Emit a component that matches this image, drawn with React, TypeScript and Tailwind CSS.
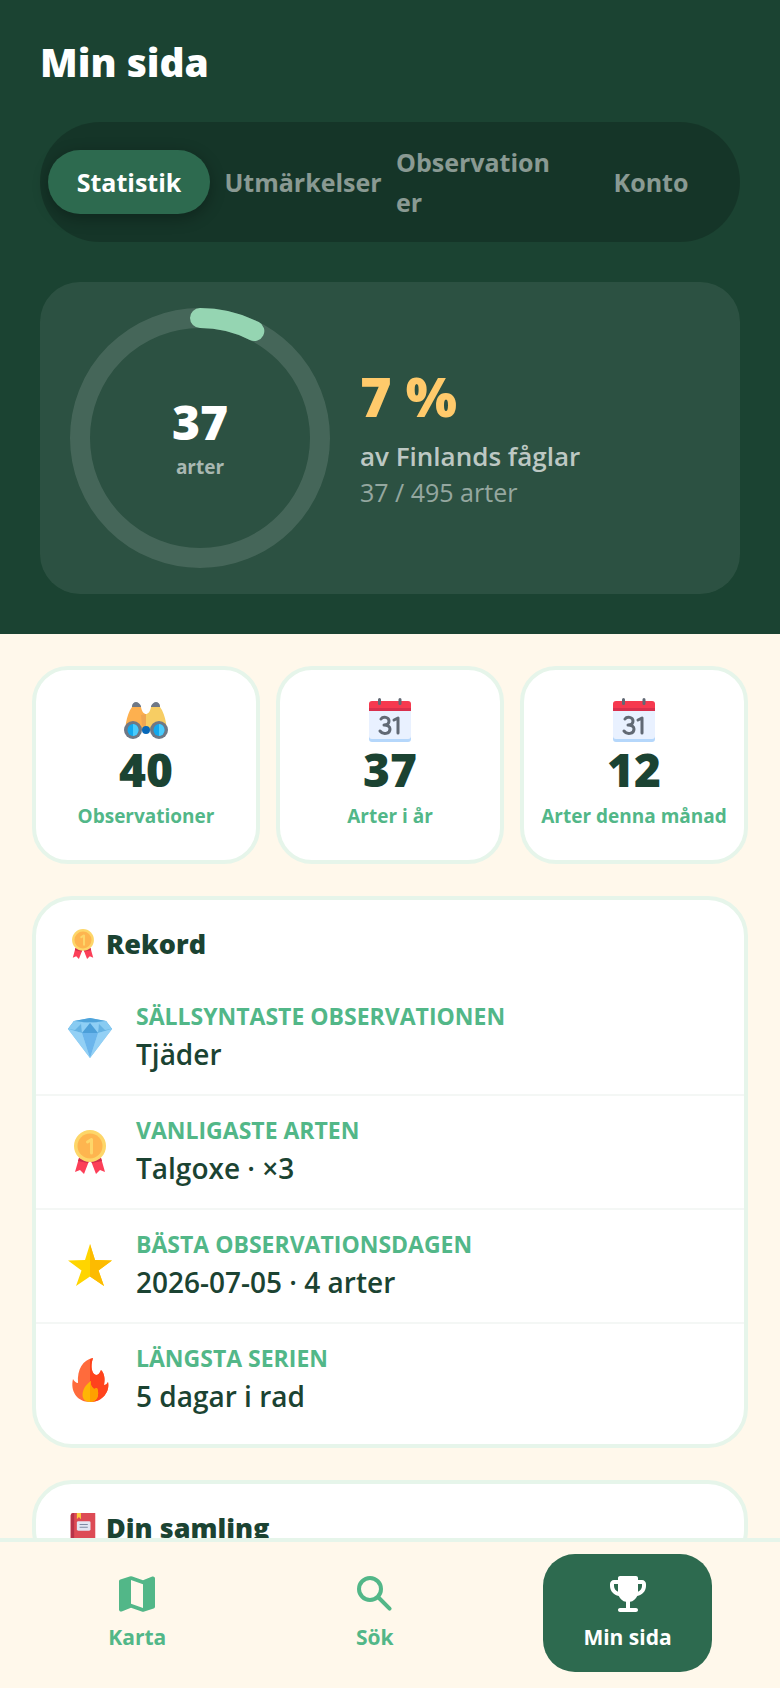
import React, { useState } from "react";

type IconProps = { className?: string };

const Binoculars = ({ className }: IconProps) => (
  <svg viewBox="0 0 44 44" className={className} aria-hidden="true">
    <path d="M8 12V8c0-2 2-4 4-4s4 2 5 4v5zM27 13V8c1-2 3-4 5-4s4 2 4 4v4z" fill="#6f7885" />
    <path d="M8 9h9c1 5 3 7 5 7v16H1l1-7C3 19 5 13 8 9z" fill="#fdb04f" />
    <path d="M36 9h-9c-1 5-3 7-5 7v16h21l-1-7c-1-6-3-12-6-16z" fill="#f7cd63" />
    <path d="M22 16v12h-4l-1-11z" fill="#efa652" />
    <circle cx="22" cy="32" r="4" fill="#0868b9" />
    <circle cx="9" cy="32" r="9" fill="#6f7885" />
    <circle cx="35" cy="32" r="9" fill="#6f7885" />
    <ellipse cx="9" cy="32" rx="5.5" ry="6" fill="#12a9ee" />
    <path d="M9 26a5.500 6 0 0 1 0 12z" fill="#4acbfb" />
    <ellipse cx="35" cy="32" rx="5.5" ry="6" fill="#12a9ee" />
    <path d="M35 26a5.500 6 0 0 1 0 12z" fill="#4acbfb" />
  </svg>
);

const Calendar = ({ className }: IconProps) => (
  <svg viewBox="0 0 44 44" className={className} aria-hidden="true">
    <rect x="1" y="10" width="42" height="34" rx="3" fill="#b5d7fb" />
    <path d="M1 12h42v26a3 3 0 0 1-3 3H4a3 3 0 0 1-3-3z" fill="#e9f1ff" />
    <path d="M4 3h36a3 3 0 0 1 3 3v7H1V6a3 3 0 0 1 3-3z" fill="#f6394f" />
    <path d="M1 10h42v3H1z" fill="#d92f4c" />
    <path d="M11.500 1.500v4M32 1.500v4" stroke="#616974" strokeWidth="3" strokeLinecap="round" />
    <path
      d="M13 21c2-3 8-2 8 2 0 3-2 4-5 4 4 0 6 2 6 4 0 5-7 6-10 2M26 22l4-2v15"
      fill="none"
      stroke="#616974"
      strokeWidth="3"
      strokeLinecap="round"
      strokeLinejoin="round"
    />
  </svg>
);

const Medal = ({ className }: IconProps) => (
  <svg viewBox="0 0 44 44" className={className} aria-hidden="true">
    <path d="M11 28l10 3-5 13-4-4-5 2z" fill="#fc3f58" />
    <path d="M33 28l-10 3 5 13 4-4 5 2z" fill="#fc3f58" />
    <path d="M11 28l10 3-1 2-10-2zM33 28l-10 3 1 2 10-2z" fill="#cf2e4c" />
    <circle cx="22" cy="16" r="16" fill="#fdd669" />
    <circle cx="22" cy="16" r="12.500" fill="#feb54f" />
    <path d="M19.500 12l4-2.500v13.500" fill="none" stroke="#fdd669" strokeWidth="3" strokeLinecap="round" strokeLinejoin="round" />
  </svg>
);

const Diamond = ({ className }: IconProps) => (
  <svg viewBox="0 0 44 44" className={className} aria-hidden="true">
    <path d="M6 5l16-3 16 3 6 8-22 29L0 13z" fill="#7cc4ee" />
    <path d="M6 5l16-3 16 3-8 2-8-1-8 1z" fill="#4fa3da" />
    <path d="M6 5L0 13l14 4L13 6z" fill="#65b2e3" />
    <path d="M38 5l6 8-14 4 1-11z" fill="#65b2e3" />
    <path d="M6 5l9 1-8 8-7-1zM38 5l-9 1 8 8 7-1z" fill="#88cbf2" />
    <path d="M13 6l9 1-8 10zM31 6l-9 1 8 10z" fill="#8fcff5" />
    <path d="M22 7l8 10H14z" fill="#4c9fd9" />
    <path d="M14 17h16l-8 25z" fill="#6bb5ec" />
    <path d="M0 13l14 4 8 25zM44 13l-14 4-8 25z" fill="#93d0f5" />
  </svg>
);

const Star = ({ className }: IconProps) => (
  <svg viewBox="0 0 44 44" className={className} aria-hidden="true">
    <path d="M22 0l5 16 17 .500-13.500 10L36 42l-14-9.500L8 42l5.500-15.500L0 16.500 17 16z" fill="#ffd500" />
    <path d="M22 0l5 16 17 .500-13.500 10L36 42l-14-9.500z" fill="#fdbb00" />
  </svg>
);

const Flame = ({ className }: IconProps) => (
  <svg viewBox="0 0 44 44" className={className} aria-hidden="true">
    <path
      d="M25 0C15 2 9 11 10 25c-2 0-4-2-5-4-3 12 4 23 17 23s20-11 18-20c-1 2-2 3-4 3 1-5 1-11-3-15-1 3-3 5-5 5-4-1-6-8-3-17z"
      fill="#ff6b3c"
    />
    <path d="M22 1l3-1c-3 9-1 16 3 17 2 0 4-2 5-5 4 4 4 10 3 15 2 0 3-1 4-3 2 9-5 20-18 20z" fill="#ff431d" />
    <path d="M22 44c-11 0-9-15 1-21-1 4 1 6 3 8l3-1c3 7 0 14-7 14z" fill="#ffb505" />
    <path d="M22 24l1-1c-1 4 1 6 3 8l3-1c3 7 0 14-7 14z" fill="#ffa000" />
  </svg>
);

const Book = ({ className }: IconProps) => (
  <svg viewBox="0 0 44 44" className={className} aria-hidden="true">
    <path d="M4 4c0-2 1-4 4-4h32v44H4z" fill="#dd4b55" />
    <path d="M4 4c0-2 1-4 4-4h1v44H4z" fill="#b83348" />
    <path d="M13 0h6v9l-3-3-3 3z" fill="#fccb3f" />
    <rect x="13" y="12" width="20" height="14" rx="2" fill="#e2e6f2" />
    <path d="M17 17h12M17 21h12" stroke="#7e8ba4" strokeWidth="1.500" />
  </svg>
);

const MapIcon = () => (
  <svg viewBox="0 0 24 24" className="size-12" fill="currentColor" fillRule="evenodd" aria-hidden="true">
    <path d="M14.350 20.780L9 18.900l-4.650 1.800C3.700 20.950 3 20.500 3 19.750v-14c0-.45.25-.85.700-1l4.650-1.550q.650-.22 1.300 0L15 5.100l4.650-1.800c.650-.25 1.350.2 1.350.95v14c0 .45-.25.850-.7 1l-4.650 1.530q-.650.220-1.300 0zM15 19V7.110L9 5v11.890z" />
  </svg>
);

const SearchIcon = () => (
  <svg
    viewBox="0 0 24 24"
    className="size-12"
    fill="none"
    stroke="currentColor"
    strokeWidth="2"
    strokeLinecap="round"
    aria-hidden="true"
  >
    <circle cx="9.500" cy="9.500" r="5.500" />
    <path d="M14 14l5.300 5.300" strokeWidth="2" />
  </svg>
);

const TrophyIcon = () => (
  <svg viewBox="0 0 24 24" className="size-12" fill="currentColor" aria-hidden="true">
    <path d="M19 5h-2V4c0-.55-.45-1-1-1H8c-.55 0-1 .45-1 1v1H5c-1.100 0-2 .9-2 2v1c0 2.550 1.920 4.630 4.390 4.940.630 1.500 1.980 2.630 3.610 2.960V19H8c-.55 0-1 .45-1 1s.45 1 1 1h8c.55 0 1-.45 1-1s-.45-1-1-1h-3v-3.100c1.630-.330 2.980-1.460 3.610-2.960C19.080 12.630 21 10.550 21 8V7c0-1.100-.9-2-2-2zM5 8V7h2v3.820C5.840 10.400 5 9.300 5 8zm14 0c0 1.300-.84 2.400-2 2.820V7h2v1z" />
  </svg>
);

const tabs = [
  { id: "stats", label: "Statistik", width: "flex-[162]" },
  { id: "awards", label: "Utmärkelser", width: "flex-[178]" },
  { id: "observations", label: ["Observation", "er"], width: "flex-[170]" },
  { id: "account", label: "Konto", width: "flex-[162]" },
];

const stats = [
  { icon: Binoculars, value: 40, label: "Observationer" },
  { icon: Calendar, value: 37, label: "Arter i år" },
  { icon: Calendar, value: 12, label: "Arter denna månad" },
];

const records = [
  { icon: Diamond, label: "Sällsyntaste observationen", value: "Tjäder" },
  { icon: Medal, label: "Vanligaste arten", value: "Talgoxe · ×3" },
  { icon: Star, label: "Bästa observationsdagen", value: "2026-07-05 · 4 arter" },
  { icon: Flame, label: "Längsta serien", value: "5 dagar i rad" },
];

const navItems = [
  { id: "map", label: "Karta", icon: MapIcon },
  { id: "search", label: "Sök", icon: SearchIcon },
  { id: "me", label: "Min sida", icon: TrophyIcon },
];

function ProgressRing({ seen, total }: { seen: number; total: number }) {
  const radius = 120;
  const length = 2 * Math.PI * radius;
  return (
    <div className="grid size-[260px] shrink-0 place-items-center">
      <svg viewBox="0 0 260 260" className="col-start-1 row-start-1 size-full -rotate-90" aria-hidden="true">
        <circle cx="130" cy="130" r={radius} fill="none" stroke="#fff" strokeOpacity="0.12" strokeWidth="20" />
        <circle
          cx="130"
          cy="130"
          r={radius}
          fill="none"
          stroke="#95d5b2"
          strokeWidth="20"
          strokeLinecap="round"
          strokeDasharray={`${(seen / total) * length} ${length}`}
        />
      </svg>
      <div className="col-start-1 row-start-1 text-center">
        <div className="text-[48px] leading-[54px] font-extrabold text-white">{seen}</div>
        <div className="mt-1 text-[19px] leading-7 font-bold text-white/60">arter</div>
      </div>
    </div>
  );
}

export default function App() {
  const [tab, setTab] = useState("stats");
  const [page, setPage] = useState("me");

  return (
    <div className="flex h-screen flex-col bg-[#fff8eb] font-['Open_Sans',sans-serif] text-[#1b4332]">
      <main className="min-h-0 flex-1 overflow-y-auto [scrollbar-width:none]">
        <header className="bg-[#1b4332] px-10 pt-8 pb-10">
          <h1 className="text-[39px] leading-[60px] font-extrabold text-white">Min sida</h1>

          <div role="tablist" className="mt-[30px] flex items-center gap-1 rounded-full bg-black/20 p-2">
            {tabs.map((t) => (
              <button
                key={t.id}
                role="tab"
                aria-selected={tab === t.id}
                onClick={() => setTab(t.id)}
                className={`${t.width} min-w-0 rounded-full py-3 text-[25px] leading-10 font-bold ${
                  tab === t.id ? "bg-[#2d6a4f] text-white shadow-[0_4px_16px_rgba(0,0,0,0.3)]" : "text-white/50"
                }`}
              >
                {Array.isArray(t.label) ? (
                  <span className="block text-left">
                    {t.label[0]}
                    <br />
                    {t.label[1]}
                  </span>
                ) : (
                  t.label
                )}
              </button>
            ))}
          </div>

          <section className="mt-10 flex items-center gap-[30px] rounded-[40px] bg-white/8 px-[30px] py-[26px]">
            <ProgressRing seen={37} total={495} />
            <div className="pb-1">
              <div className="text-[54px] leading-[68px] font-extrabold text-[#ffca6b]">7 %</div>
              <div className="mt-2 text-[26px] leading-9 font-semibold text-white/70">av Finlands fåglar</div>
              <div className="text-[25px] leading-9 text-white/50">37 / 495 arter</div>
            </div>
          </section>
        </header>

        <div className="flex flex-col gap-8 p-8">
          <section className="grid grid-cols-3 gap-4">
            {stats.map(({ icon: Icon, value, label }) => (
              <div
                key={label}
                className="flex flex-col items-center rounded-[36px] border-4 border-[#e6f5ea] bg-white pt-7 pb-[30px]"
              >
                <Icon className="size-11" />
                <div className="text-[46px] leading-[54px] font-extrabold">{value}</div>
                <div className="mt-1.5 text-[19px] leading-7 font-bold whitespace-nowrap text-[#52b788]">{label}</div>
              </div>
            ))}
          </section>

          <section className="rounded-[40px] border-4 border-[#e6f5ea] bg-white pb-2">
            <h2 className="flex items-center gap-2 px-8 pt-7 pb-[22px] text-[27px] leading-8 font-extrabold">
              <Medal className="size-[30px]" />
              Rekord
            </h2>
            <ul>
              {records.map(({ icon: Icon, label, value }) => (
                <li key={label} className="flex items-center gap-6 border-b-2 border-[#f4f7f5] px-8 py-5 last:border-b-0">
                  <Icon className="size-11 shrink-0" />
                  <div>
                    <div className="text-[23px] leading-7 font-bold text-[#52b788] uppercase">{label}</div>
                    <div className="mt-1 text-[28px] leading-10 font-semibold">{value}</div>
                  </div>
                </li>
              ))}
            </ul>
          </section>

          <section className="rounded-[40px] border-4 border-[#e6f5ea] bg-white">
            <h2 className="flex items-center gap-2 px-8 pt-7 pb-[22px] text-[27px] leading-8 font-extrabold">
              <Book className="size-[30px]" />
              Din samling
            </h2>
          </section>
        </div>
      </main>

      <nav className="flex shrink-0 justify-around border-t-4 border-[#e6f5ea] px-4 pt-3 pb-4">
        {navItems.map(({ id, label, icon: Icon }) => (
          <button
            key={id}
            onClick={() => setPage(id)}
            className={`flex flex-col items-center gap-1 rounded-[32px] px-10 pt-4 pb-5 text-[21px] leading-[30px] font-bold ${
              page === id ? "bg-[#2d6a4f] text-white" : "text-[#52b788]"
            }`}
          >
            <Icon />
            {label}
          </button>
        ))}
      </nav>
    </div>
  );
}
